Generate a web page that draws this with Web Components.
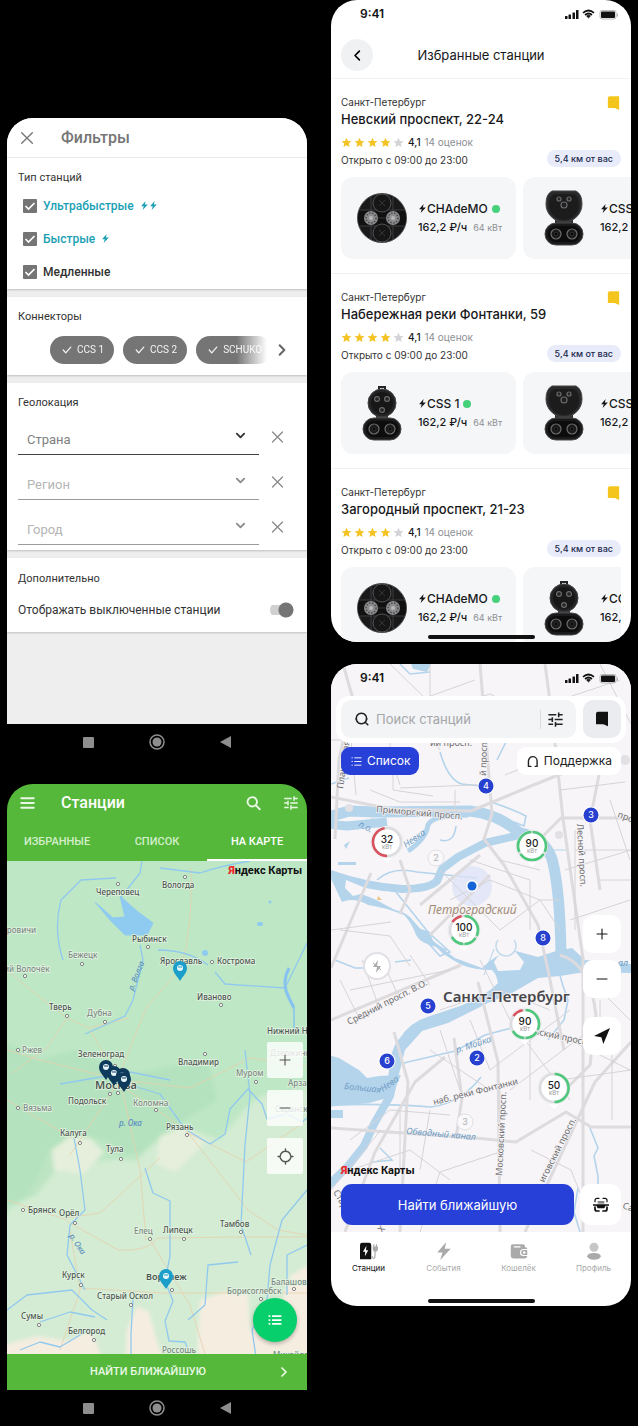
<!DOCTYPE html>
<html lang="ru">
<head>
<meta charset="utf-8">
<meta name="viewport" content="width=device-width, initial-scale=1">
<title>Зарядные станции</title>
<style>
  html, body { margin: 0; background: #000; }
  body { font-family: Inter, "Noto Sans", sans-serif; }
</style>
</head>
<body>
<app-gallery>
  <filters-screen slot="left"></filters-screen>
  <stations-map-screen slot="left"></stations-map-screen>
  <favorites-screen slot="right"></favorites-screen>
  <city-map-screen slot="right"></city-map-screen>
</app-gallery>
<script>
const define = (tag, css, render) => customElements.define(tag, class extends HTMLElement {
  connectedCallback() {
    if (this.shadowRoot) return;
    this.attachShadow({ mode: 'open' }).innerHTML =
      `<style>*{box-sizing:border-box}:host{display:block}button{font:inherit;color:inherit;border:0;background:none;padding:0;margin:0;cursor:pointer}a{color:inherit;text-decoration:none}svg{display:block}${css}</style>${render(this)}`;
  }
});

/* ---------- icons ---------- */
const stroke = (d, w = 2) => `<path d="${d}" fill="none" stroke="currentColor" stroke-width="${w}" stroke-linecap="round" stroke-linejoin="round"/>`;
const solid = d => `<path d="${d}" fill="currentColor"/>`;
const ICONS = {
  close: stroke('M4 4 20 20M20 4 4 20'),
  bolt: solid('M15 0 3 14h7l-3 10L21 9h-8z'),
  check: stroke('M3 12l6 7L21 5', 3),
  down: stroke('M4 8l8 8 8-8', 4),
  right: stroke('M8 4l8 8-8 8', 3.500),
  left: stroke('M15 5l-7 7 7 7', 2.600),
  menu: stroke('M2 4.500h20M2 12h20M2 19.500h20', 3.200),
  search: stroke('M10 2.500a7.500 7.500 0 1 0 .01 0zM15.500 15.500 22 22', 3),
  find: stroke('M11 2a9 9 0 1 0 .01 0zM17.500 17.500 22 22', 2.600),
  tune: solid('M3 17v2h6v-2H3zM3 5v2h10V5H3zm10 16v-2h8v-2h-8v-2h-2v6h2zM7 9v2H3v2h4v2h2V9H7zm14 4v-2H11v2h10zm-6-4h2V7h4V5h-4V3h-2v6z'),
  list: solid('M1 4h3v3H1zM7 4h16v3H7zM1 10.500h3v3H1zM7 10.500h16v3H7zM1 17h3v3H1zM7 17h16v3H7z'),
  listThin: stroke('M2 4h1M8 4h14M2 12h1M8 12h14M2 20h1M8 20h14', 2),
  plus: stroke('M12 2v20M2 12h20', 2.200),
  minus: stroke('M2 12h20', 2.200),
  locate: stroke('M12 4.500a7.500 7.500 0 1 0 .01 0zM12 1.500v3M12 19.500v3M1.500 12h3M19.500 12h3', 2),
  arrow: solid('M24 0 0 12l11 2 3 10z'),
  bookmark: solid('M6 1h15v22l-7-3H3V4a3 3 0 0 1 3-3z'),
  head: stroke('M9 21H4.500V11a8 8 0 0 1 16 0v10H17', 2.600),
  star: solid('M12 1.500l3.200 7 7.600.8-5.700 5.100 1.600 7.500L12 18l-6.700 3.900 1.600-7.500L1.200 9.300l7.600-.8z'),
  scan: `${stroke('M3 7V5a3 3 0 0 1 3-3h3M15 2h3a3 3 0 0 1 3 3v2', 1.800)}<path d="M7 6h10v4H7z" fill="currentColor" opacity=".5"/>${solid('M0 11h24v2H0zM5 13h14l-2 4H7z')}${stroke('M3 15v3a3 3 0 0 0 3 3h3M15 21h3a3 3 0 0 0 3-3v-3', 2.600)}`,
  station: `${solid('M3 1h9a3 3 0 0 1 3 3v19H0V4a3 3 0 0 1 3-3z')}<path d="M8.500 5 4 13h3l-.5 6L11 11H8z" fill="#fff"/><path d="M22 3v4M18.500 3v4M20 12v6q0 4-2 4-1.500 0-1.500-3" fill="none" stroke="#aaa" stroke-width="1.600"/><path d="M17 6h7v3q0 4-3.500 4T17 9z" fill="#aaa"/>`,
  wallet: `${solid('M4 3h13a3 3 0 0 1 3 3v1h1q2 0 2 2v9a4 4 0 0 1-4 4H5a4 4 0 0 1-4-4V6a3 3 0 0 1 3-3z')}<path d="M5 6.500h9M24 10h-6a4 4 0 0 0 0 8h6" fill="none" stroke="#fff" stroke-width="1.600"/><circle cx="19" cy="14" r="1.800" fill="#fff"/>`,
  profile: `<circle cx="12" cy="7" r="6" fill="#c6c6c6"/><ellipse cx="12" cy="19" rx="9" ry="4.500" fill="currentColor"/>`
};
define('ui-icon', `:host{display:inline-block;flex:none;width:16px;height:16px}svg{width:100%;height:100%;overflow:visible}`,
  el => `<svg viewBox="0 0 24 24" aria-hidden="true">${ICONS[el.getAttribute('name')]}</svg>`);

/* ---------- gallery and device parts ---------- */
define('app-gallery', `
  :host{display:grid;grid-template-columns:1fr 1fr;gap:24px;padding:0 7px}
  div{display:flex;flex-direction:column;min-width:0}
  .l{padding-top:118px;gap:24px}.r{gap:22px}`,
  () => `<div class="l"><slot name="left"></slot></div><div class="r"><slot name="right"></slot></div>`);

define('android-nav', `
  :host{display:grid;grid-template-columns:repeat(3,1fr);height:36px;padding:0 47px;background:#000;color:#8e8e8e;flex:none}
  button{display:grid;place-items:center}svg{width:16px;height:16px}`,
  () => `<button aria-label="Недавние"><svg viewBox="0 0 16 16"><rect x="3" y="3" width="11" height="11" rx="1" fill="currentColor"/></svg></button>
  <button aria-label="Домой"><svg viewBox="0 0 16 16"><circle cx="8" cy="8" r="7" fill="none" stroke="currentColor" stroke-width="1.500"/><circle cx="8" cy="8" r="4.500" fill="currentColor"/></svg></button>
  <button aria-label="Назад"><svg viewBox="0 0 16 16"><path d="M13 2v12L2 8z" fill="currentColor"/></svg></button>`);

define('ios-status', `
  :host{display:flex;justify-content:space-between;align-items:center;height:28px;padding:0 12px 0 29px;font-size:12px;line-height:16px;font-weight:600;color:#111;flex:none}
  svg{width:55px;height:12px}`,
  () => `<span>9:41</span><svg viewBox="0 0 55 12" aria-hidden="true"><g fill="#111"><rect x="1" y="8" width="2.500" height="3" rx=".5"/><rect x="4.500" y="6.500" width="2.500" height="4.500" rx=".5"/><rect x="8.500" y="4.500" width="2.500" height="6.500" rx=".5"/><rect x="12" y="2" width="2.500" height="9" rx=".5"/>
  <path d="M24.500 9.800l-1.800-1.700a2.600 2.600 0 0 1 3.600 0z" stroke="#111" stroke-width="1"/><rect x="37" y="3.500" width="14" height="6.500" rx="1"/><rect x="52.800" y="5.500" width="1" height="3" fill="#aaa"/></g>
  <path d="M19 4.800q5.500-4.600 11 0M21 7q3.500-3 7 0" fill="none" stroke="#111" stroke-width="1.700"/><rect x="36" y="2.500" width="16" height="8.500" rx="2" fill="none" stroke="#aaa" stroke-width=".8"/></svg>`);

/* ---------- filters ---------- */
define('filter-section', `
  :host{background:#fff;padding:0 11px;box-shadow:0 1px 2px #0003}
  h2{margin:0;font-size:11px;line-height:16px;font-weight:400;color:#333}`,
  el => `<h2>${el.getAttribute('heading')}</h2><slot></slot>`);

define('filter-check', `
  :host{color:var(--tone,#333)}
  label{display:flex;align-items:center;height:33px;font-size:12px;line-height:18px;font-weight:500}
  input{appearance:none;width:14px;height:14px;margin:0 6px 0 5px;border-radius:1px;background:#757575 url("data:image/svg+xml,%3Csvg xmlns='http://www.w3.org/2000/svg' viewBox='0 0 14 14'%3E%3Cpath d='M2.500 7l3 3 6-6' fill='none' stroke='white' stroke-width='1.700'/%3E%3C/svg%3E")}
  ui-icon{width:9px;height:11px}.b{display:flex;margin-left:6px}`,
  el => `<label><input type="checkbox" checked>${el.textContent}<span class="b">${'<ui-icon name="bolt"></ui-icon>'.repeat(+el.getAttribute('bolts'))}</span></label>`);

define('connector-chip', `
  :host{flex:none}
  button{display:flex;align-items:center;gap:5px;height:28px;padding:0 10px 0 12px;border-radius:14px;background:#757575;color:#f4f4f4;font-size:10px;line-height:14px}
  ui-icon{width:10px;height:10px}`,
  () => `<button aria-pressed="true"><ui-icon name="check"></ui-icon><slot></slot></button>`);

define('geo-field', `
  :host{display:grid;grid-template-columns:1fr 37px;height:45px;align-items:center}
  .f{position:relative;display:flex;align-items:flex-end;height:37px;border-bottom:1px solid var(--line,#9b9b9b)}
  select{appearance:none;width:100%;height:28px;border:0;background:none;padding:0 9px;font:400 13px/18px Roboto,sans-serif;color:var(--ink,#b5b5b5);opacity:1}
  .f ui-icon{position:absolute;right:13px;top:12px;width:11px;height:11px;color:var(--arrow,#8a8a8a);pointer-events:none}
  button{display:grid;place-items:center;color:#8a8a8a}button ui-icon{width:15px}`,
  el => { const n = el.getAttribute('name'); return `<div class="f"><select aria-label="${n}"><option>${n}</option></select><ui-icon name="down"></ui-icon></div><button aria-label="Очистить: ${n}"><ui-icon name="close"></ui-icon></button>`; });

define('filters-screen', `
  :host{display:flex;flex-direction:column;font-family:Roboto,sans-serif;aspect-ratio:300/642;border-radius:26px 26px 0 0;overflow:hidden;background:#eee}
  header{display:flex;align-items:center;height:40px;padding-left:12px;gap:26px;background:#fff;color:#757575;border-bottom:1px solid #eee;flex:none}
  header ui-icon{width:16px;height:16px;display:block}
  h1{margin:0;font-size:16px;line-height:20px;font-weight:500}
  main{display:flex;flex-direction:column;gap:8px;flex:1}
  .type{padding-top:12px;padding-bottom:1px}
  .conn{padding-top:12px;padding-bottom:11px}.geo{padding-top:12px;padding-bottom:1px}.more{padding-top:13px;padding-bottom:12px}
  .checks{padding-top:3px}
  .row{display:flex;align-items:center;padding:11px 0 0 32px}
  .chips{display:flex;gap:9px;width:217px;overflow:hidden;-webkit-mask:linear-gradient(90deg,#000 86%,transparent 100%);mask:linear-gradient(90deg,#000 86%,transparent 100%)}
  .row button{margin-left:8px;color:#666}.row ui-icon,.row button{display:block;width:14px;height:14px}
  .fields{padding-top:3px}
  .toggle{display:flex;justify-content:space-between;align-items:center;font-size:12px;line-height:20px;color:#333;padding:13px 2px 0 0}
  .toggle input{appearance:none;margin:0;width:24px;height:16px;background:radial-gradient(circle at 16px 8px,#757575 7px,transparent 8px),linear-gradient(#d0d0d0,#d0d0d0) 0 3px/20px 10px no-repeat;border-radius:8px}`,
  () => `<header><button aria-label="Закрыть"><ui-icon name="close"></ui-icon></button><h1>Фильтры</h1></header>
  <main>
    <filter-section class="type" heading="Тип станций"><div class="checks">
      <filter-check bolts="2" style="--tone:#1b9fb5">Ультрабыстрые</filter-check>
      <filter-check bolts="1" style="--tone:#1b9fb5">Быстрые</filter-check>
      <filter-check bolts="0">Медленные</filter-check></div></filter-section>
    <filter-section class="conn" heading="Коннекторы"><div class="row"><div class="chips">
      <connector-chip>CCS 1</connector-chip><connector-chip>CCS 2</connector-chip><connector-chip>SCHUKO</connector-chip></div>
      <button aria-label="Далее"><ui-icon name="right"></ui-icon></button></div></filter-section>
    <filter-section class="geo" heading="Геолокация"><div class="fields">
      <geo-field name="Страна" style="--line:#444;--ink:#808080;--arrow:#333"></geo-field>
      <geo-field name="Регион"></geo-field><geo-field name="Город"></geo-field></div></filter-section>
    <filter-section class="more" heading="Дополнительно">
      <label class="toggle">Отображать выключенные станции<input type="checkbox" role="switch" checked></label></filter-section>
  </main><android-nav></android-nav>`);

/* ---------- region map ---------- */
const town = (name, x, y, dx, dy, cls = '') => `<circle cx="${dx}" cy="${dy}" r="1.600" fill="#fff" stroke="#666" stroke-width=".8"/><text x="${x}" y="${y}" class="${cls}">${name}</text>`;
const drop = (x, y, c) => `<path d="M${x} ${y}c-3-5-7-8-7-13a7 7 0 0 1 14 0c0 5-4 8-7 13z" fill="${c}"/><circle cx="${x}" cy="${y - 13}" r="3" fill="#e8f6fb"/><path d="M${x - 2} ${y - 14}h4" stroke="${c}"/>`;
define('region-map', `
  :host{position:absolute;inset:0}
  svg{width:100%;height:100%}
  text{font:500 8px/10px "Noto Sans",sans-serif;fill:#4c5651;stroke:#e4f3e2;stroke-width:1.500px;paint-order:stroke}
  .s{fill:#7b8a83}.b{font-weight:600;font-size:9px}.w{fill:#5b8fc0;font-style:italic;stroke:none}
  .big{font-size:11px;font-weight:600}`,
  () => `<svg viewBox="7 861 300 493" preserveAspectRatio="xMidYMid slice" role="img" aria-label="Карта региона">
  <defs><filter id="soft" x="-5%" y="-5%" width="110%" height="110%"><feGaussianBlur stdDeviation="2"/></filter></defs>
  <rect x="7" y="861" width="300" height="493" fill="#d3ecd3"/>
  <g filter="url(#soft)">
  <path d="M0 850h315v235l-28 8-24 2-17 12-26 32-20-6-20-8-25 14-18 22-20-2-20 3-16-7-15-14-16 8-14 30-13 22-15 9-21 28-7-3z" fill="#bde7c5"/>
  <path d="M0 1040l37 20 40-10 50 25 80-15 10 40-30 18-25 20-20 15-22 2-10-14-30-5-25 35-20 25-35 10z" fill="#aee0b9" opacity=".6"/>
  <path d="M52 1150l18-14 20 2 14 14-20 22-30-4zM160 1136l26-10 20 16-30 30-20-8z" fill="#e6efdc"/>
  <path d="M137 1306l12 6 6 22 8 26h-38l2-30zM200 1300l24-8 24 1 4 68h-55zM290 1276l20-12v98h-58l-2-30 28-20zM0 1346l37-10 30 5 24-11 12 30H0z" fill="#f6ede1"/></g>
  <g fill="none" stroke="#e9d0ac" stroke-width="1" opacity=".8"><path d="M7 970q35 30 60 48l22 10 40-10M67 1018l-20 30-35 25M90 1030l28 48 28-70 35-40q12-40 10-100M120 1080l70 8 60-30 57 8M120 1080l-50 75M120 1080l20 90 6 70M120 1080l-80-20-33-10M120 1085l66 45 62 80 30 20 29 5M160 1158l-60 55-33 5M60 1350l20-60-10-60M68 1222l50 28q30 2 40-12l82-1 67 0M80 1288l82 5 145 0M150 1240l40 65 15 49M7 1100l65 38M7 1200l60 20M186 1132l60 30 58-40"/></g>
  <g fill="none" stroke="#91c9ee" stroke-width="1.300" stroke-linejoin="round"><path d="M142 861l-2 12-19 24M250 861q-30 5-50 12l-40-5M63 960q-10-30-2-60l20-20 35-2M140 945l3 15-10 40-8 16-22 10-18 8M158 950q30 0 50 15M215 972l10 12 60 4 22-45M170 1080l-40-8-70 12M120 1082l40 12 25 35 25 15 15-10 5-25 18-20 14 15 5 15 20-5 15 8 25-20M245 1050l5 45-5 50-4 80 10 30M74 1138l6 32 5 40-15 15-3 30 18 35M145 1168l8 25 17 8 0 55-5 25 8 20-8 20 4 20 16 1 8 20M307 1245l-20 10 0 40M307 1190l-25 30-12 45-3 35-15 30 8 54M238 1262l-30 3-3 40-17 15M131 1354l0-20 2-35M7 1310l20-15 45-5 20 20 15 10M40 1322l30-10 25 5M20 1350l20-8 20 5 30-18"/></g>
  <path d="M289 968q-8 15 0 30l5 10" fill="none" stroke="#87c3ee" stroke-width="3"/><path d="M294 1008v24" stroke="#87c3ee" stroke-width="1.500"/>
  <path d="M120 896l5 21-12 1-18-16 15 18 15 15h22l6-12-15-11z" fill="#8fcbf1" stroke="#8fcbf1" stroke-linejoin="round"/>
  <g fill="#8fcbf1"><ellipse cx="260" cy="924" rx="3" ry="2"/><ellipse cx="205" cy="953" rx="3" ry="3"/><circle cx="270" cy="902" r="1.500"/></g>
  ${town('Череповец', 96, 895, 118, 884)}${town('Вологда', 162, 888, 185, 877)}${town('Рыбинск', 132, 942, 148, 947)}
  ${town('Бежецк', 68, 958, 82, 964, 's')}${town('Ярославль', 160, 964, 182, 970)}${town('Кострома', 217, 964, 212, 962)}
  <text x="2" y="933" class="s">оровичи</text>${town('ий Волочёк', 4, 972, 25, 976, 's')}
  ${town('Иваново', 197, 1000, 221, 1005)}${town('Тверь', 49, 1010, 67, 1016)}${town('Дубна', 87, 1016, 105, 1022, 's')}
  <text x="267" y="1034">Нижний Н</text>${town('Ржев', 22, 1053, 18, 1050, 's')}${town('Зеленоград', 78, 1057, 115, 1066)}
  ${town('Владимир', 178, 1065, 205, 1054)}${town('Муром', 236, 1076, 256, 1082, 's')}<text x="270" y="1056" class="s">Дзержинск</text><text x="288" y="1086" class="s">Арзамас</text>
  ${town('Москва', 95, 1089, 118, 1093, 'big')}${town('Подольск', 68, 1104, 110, 1094)}${town('Коломна', 133, 1106, 156, 1110, 's')}
  ${town('Вязьма', 23, 1111, 18, 1108, 's')}${town('Калуга', 60, 1136, 80, 1143)}${town('Рязань', 166, 1130, 187, 1135)}${town('Тула', 106, 1152, 121, 1159)}
  <text x="275" y="1112" class="s">Саранск</text>
  ${town('Брянск', 28, 1213, 23, 1210)}${town('Орёл', 59, 1216, 75, 1223)}${town('Елец', 134, 1234, 150, 1239, 's')}${town('Липецк', 163, 1233, 184, 1239)}${town('Тамбов', 220, 1227, 241, 1232)}
  ${town('Курск', 62, 1278, 81, 1285)}${town('Воронеж', 146, 1280, 172, 1290, 'b')}${town('Старый Оскол', 97, 1299, 131, 1305)}
  ${town('Балашов', 271, 1285, 294, 1289, 's')}${town('Борисоглебск', 227, 1294, 261, 1299, 's')}${town('Сумы', 21, 1319, 39, 1325)}${town('Белгород', 68, 1334, 94, 1340)}
  <text x="162" y="1353" class="s">Россошь</text><text x="273" y="1358" class="s">Михайлов</text>
  <text class="w" transform="translate(133 991) rotate(-68)">р. Волга</text><text class="w" x="119" y="1126">р. Ока</text><text class="w" transform="translate(69 1236) rotate(57)">р. Ока</text>
  ${drop(180, 981, '#1b9ec9')}${drop(106, 1080, '#0e3a5c')}${drop(114, 1086, '#0e3a5c')}${drop(123, 1088, '#0e3a5c')}${drop(124, 1092, '#0e3a5c')}${drop(166, 1289, '#1b9ec9')}
  </svg>`);

define('yandex-mark', `:host{font:700 11px/16px Roboto,sans-serif;color:#111}b{color:#f02a2a}`, () => `<b>Я</b>ндекс Карты`);

define('stations-map-screen', `
  :host{display:flex;flex-direction:column;font-family:Roboto,sans-serif;aspect-ratio:300/642;border-radius:26px 26px 0 0;overflow:hidden;background:#55b83b}
  header{color:#fff;flex:none}
  .bar{display:flex;align-items:center;height:37px;padding:0 7px 0 13px}
  .bar ui-icon{width:18px;height:18px;display:block;color:#e9f7e5}
  .bar button:first-child ui-icon,.bar h1+button ui-icon{width:15px}
  h1{margin:0 auto 0 26px;font-size:16px;line-height:20px;font-weight:500}
  .bar button+button{margin-left:21px}
  nav{display:grid;grid-template-columns:repeat(3,1fr);height:40px}
  nav a{display:grid;place-items:center;font-size:11px;line-height:16px;font-weight:500;color:#d3efca;border-bottom:2px solid transparent;padding-top:4px}
  nav a[aria-current]{color:#fff;border-color:#fff}
  .map{position:relative;flex:1;overflow:hidden}
  yandex-mark{position:absolute;right:5px;top:2px}
  .ctl{position:absolute;right:4px;top:181px;display:flex;flex-direction:column;gap:12px}
  .ctl button{width:36px;height:36px;display:grid;place-items:center;background:#ffffffc9;color:#555;border-radius:2px}
  .ctl ui-icon{width:12px;height:12px}.ctl button:last-child ui-icon{width:17px;height:17px}
  .fab{position:absolute;right:10px;bottom:12px;width:44px;height:44px;border-radius:50%;background:#06cf6c;color:#fff;display:grid;place-items:center;box-shadow:0 2px 4px #0004}
  .fab ui-icon{width:14px;height:14px}
  .find{position:relative;height:36px;flex:none;color:#eaf8e6;font-size:11px;line-height:16px;font-weight:500;padding-right:18px}
  .find ui-icon{position:absolute;right:17px;top:12px;width:12px;height:12px}`,
  () => `<header><div class="bar"><button aria-label="Меню"><ui-icon name="menu"></ui-icon></button><h1>Станции</h1><button aria-label="Поиск"><ui-icon name="search"></ui-icon></button><button aria-label="Фильтры"><ui-icon name="tune"></ui-icon></button></div>
  <nav><a href="#fav">ИЗБРАННЫЕ</a><a href="#list">СПИСОК</a><a href="#map" aria-current="page">НА КАРТЕ</a></nav></header>
  <div class="map"><region-map></region-map><yandex-mark></yandex-mark>
  <div class="ctl"><button aria-label="Приблизить"><ui-icon name="plus"></ui-icon></button><button aria-label="Отдалить"><ui-icon name="minus"></ui-icon></button><button aria-label="Моё место"><ui-icon name="locate"></ui-icon></button></div>
  <button class="fab" aria-label="Список"><ui-icon name="list"></ui-icon></button></div>
  <button class="find">НАЙТИ БЛИЖАЙШУЮ<ui-icon name="right"></ui-icon></button><android-nav></android-nav>`);

/* ---------- favourites ---------- */
const socket = (x, y, r) => `<circle cx="${x}" cy="${y}" r="${r}" fill="#1a1a1b" stroke="#6d6d70" stroke-width="1.200"/><circle cx="${x}" cy="${y}" r="${r / 3}" fill="#050505" stroke="#3c3c3e" stroke-width=".6"/>`;
const pill = `<rect x="6" y="33" width="38" height="22" rx="11" fill="#1b1b1c" stroke="#4a4a4c"/><rect x="9" y="36" width="32" height="16" rx="8" fill="#0c0c0d"/>${socket(17, 44, 5)}${socket(33, 44, 5)}`;
const PLUGS = {
  chademo: `<defs><clipPath id="face"><circle cx="25" cy="28" r="24"/></clipPath></defs><circle cx="25" cy="28" r="24.500" fill="#19191a" stroke="#505052"/><path d="M0 20h50v16H0zM14 0v56M36 0v56" fill="#111" stroke="#3c3c3f" clip-path="url(#face)"/><g fill="#161617" stroke="#525255"><circle cx="25" cy="13" r="9"/><circle cx="25" cy="43" r="9"/></g><path d="M22 10l6 6M28 10l-6 6M22 40l6 6M28 40l-6 6M21 28h8" stroke="#343436"/><g fill="#8b8b8e"><circle cx="14" cy="28" r="7"/><circle cx="36" cy="28" r="7"/></g><g fill="none" stroke="#4b4b4e" stroke-dasharray="1.500 1.500" stroke-width="1.500"><circle cx="14" cy="28" r="5"/><circle cx="36" cy="28" r="5"/></g><g fill="#b8b8ba"><circle cx="14" cy="28" r="2"/><circle cx="36" cy="28" r="2"/></g>`,
  css2: `<path d="M16 30h18v5H16z" fill="#303032"/><path d="M13 1h24q6 3 6 13a18 18 0 0 1-36 0Q7 4 13 1z" fill="#2a2a2b" stroke="#454547"/><path d="M15 4h20q5 3 5 11a15 15 0 0 1-30 0q0-8 5-11z" fill="#1c1c1d"/>${socket(20, 9, 2)}${socket(30, 9, 2)}${socket(25, 15, 3)}${pill}`,
  css1: `<path d="M19 29h12v5H19z" fill="#3a3a3c"/><path d="M22 7V2h6v5" fill="none" stroke="#242425" stroke-width="2"/><circle cx="25" cy="18" r="14" fill="#242425" stroke="#444446"/><circle cx="25" cy="18" r="11" fill="#171718"/>${socket(20, 14, 2.400)}${socket(30, 14, 2.400)}${socket(25, 25, 2.400)}${pill}`
};
define('connector-card', `
  :host{flex:none;display:flex;align-items:center;gap:11px;width:175px;height:82px;padding-left:16px;border-radius:12px;background:#f4f6f8;white-space:nowrap;overflow:hidden;color:#17181a}
  svg{width:50px;height:56px;flex:none}
  p{margin:0;display:flex;align-items:center;height:19px;font-size:11px;line-height:19px;font-weight:500}
  p:first-child{font-size:12px}
  p ui-icon{width:9px;height:13px}.dot{width:8px;height:8px;border-radius:50%;background:#45d17a;margin-left:4px}
  small{font-size:9px;font-weight:400;color:#8c8f94;margin-left:6px}`,
  el => `<svg viewBox="0 0 50 56" role="img" aria-label="${el.textContent}">${PLUGS[el.getAttribute('plug')]}</svg><div><p><ui-icon name="bolt"></ui-icon>${el.textContent}<span class="dot"></span></p><p>162,2 ₽/ч<small>64 кВт</small></p></div>`);

define('station-item', `
  :host{padding:15px 10px 14px;border-bottom:1px solid #f0f0f0;color:#17181a}
  .city{font-size:10px;line-height:16px;color:#333}
  h2{margin:0;font-size:13px;line-height:18px;font-weight:500}
  .rate{display:flex;align-items:center;height:16px;margin-top:6px;font-size:10px;line-height:16px}
  .stars{display:flex;gap:2px;color:#f4c426;margin-right:4px}.stars ui-icon{width:11px;height:11px}.stars ui-icon:last-child{color:#d3d3d8}
  .rate b{font-weight:500;margin-right:4px}.rate span{color:#8c8f94}
  .open{display:flex;justify-content:space-between;align-items:center;height:20px;font-size:10px;line-height:16px;color:#333}
  .chip{height:17px;line-height:17px;padding:0 8px;border-radius:9px;background:#e8ecfa;color:#20264a;font-size:9px;margin-bottom:3px;font-weight:500}
  .cards{display:flex;gap:7px;overflow:hidden;margin:7px var(--bleed,-10px) 0 0}`,
  el => `<div class="city">Санкт-Петербург</div><h2>${el.getAttribute('address')}</h2>
  <div class="rate"><div class="stars" role="img" aria-label="4 из 5">${'<ui-icon name="star"></ui-icon>'.repeat(5)}</div><b>4,1</b><span>14 оценок</span></div>
  <div class="open">Открыто с 09:00 до 23:00<span class="chip">5,4 км от вас</span></div><div class="cards"><slot></slot></div>`);

define('favorites-screen', `
  :host{position:relative;display:flex;flex-direction:column;aspect-ratio:300/642;border-radius:26px;overflow:hidden;background:#fff}
  header{display:grid;grid-template-columns:32px 1fr 32px;align-items:center;height:51px;padding:4px 10px 0;border-bottom:1px solid #f3f3f3;flex:none}
  header button{width:32px;height:32px;border-radius:50%;background:#f0f1f3;display:grid;place-items:center}header ui-icon{width:15px;height:15px}
  h1{margin:0;text-align:center;font-size:13px;line-height:18px;font-weight:400;color:#17181a}
  main{flex:1;min-height:0;overflow:hidden}.wrap{position:relative}
  .save{position:absolute;right:10px;top:16px;color:#f4c61d}.save ui-icon{display:block;width:15px;height:16px}
  .home{position:absolute;left:50%;bottom:3px;width:107px;height:4px;margin-left:-53px;border-radius:2px;background:#111}`,
  () => { const save = '<button class="save" aria-label="Убрать из избранного"><ui-icon name="bookmark"></ui-icon></button>'; return `<ios-status></ios-status>
  <header><button aria-label="Назад"><ui-icon name="left"></ui-icon></button><h1>Избранные станции</h1></header>
  <main>
  <div class="wrap"><station-item address="Невский проспект, 22-24"><connector-card plug="chademo">CHAdeMO</connector-card><connector-card plug="css2">CSS 2</connector-card></station-item>${save}</div>
  <div class="wrap"><station-item address="Набережная реки Фонтанки, 59"><connector-card plug="css1">CSS 1</connector-card><connector-card plug="css2">CSS 2</connector-card></station-item>${save}</div>
  <div class="wrap"><station-item address="Загородный проспект, 21-23" style="--bleed:0px"><connector-card plug="chademo">CHAdeMO</connector-card><connector-card plug="css1">CCS 1</connector-card></station-item>${save}</div>
  </main><div class="home"></div>`; });

/* ---------- city map ---------- */
const dotPin = (x, y, n) => `<circle cx="${x}" cy="${y}" r="8.500" fill="#fff"/><circle cx="${x}" cy="${y}" r="7.500" fill="#2740d0"/><text x="${x}" y="${y + 3}" class="n">${n}</text>`;
const arc = (x, y, a, b, c) => { const p = t => { const r = (t - 90) * Math.PI / 180; return `${(x + 14 * Math.cos(r)).toFixed(1)} ${(y + 14 * Math.sin(r)).toFixed(1)}`; }; return `<path d="M${p(a)}A14 14 0 ${b - a > 180 ? 1 : 0} 1 ${p(b)}" fill="none" stroke="${c}" stroke-width="2.600"/>`; };
const power = (x, y, n, arcs) => `<path d="M${x - 7} ${y + 13}l7 8 7-8z" fill="#fff"/><circle cx="${x}" cy="${y}" r="16" fill="#fff" stroke="#0001"/><circle cx="${x}" cy="${y}" r="14" fill="none" stroke="#dcdce0" stroke-width="2.600"/>${arcs.map(a => arc(x, y, ...a)).join('')}<text x="${x}" y="${y + 1}" class="p">${n}</text><text x="${x}" y="${y + 7}" class="k">кВт</text>`;
const G = '#4fc77c', R = '#d9535f';
define('city-map', `
  :host{position:absolute;inset:0}svg{width:100%;height:100%}
  text{font:400 9px/12px "Noto Sans",sans-serif;fill:#6d6d70;stroke:#f6f4f6;stroke-width:1.500px;paint-order:stroke}
  .n{font:500 9px/12px Inter,sans-serif;fill:#fff;stroke:none;text-anchor:middle}
  .p{font:500 10px/12px Inter,sans-serif;fill:#222;stroke:none;text-anchor:middle}
  .k{font:400 6px/8px Inter,sans-serif;fill:#9a9a9e;stroke:none;text-anchor:middle}
  .g{font:400 9px/12px Inter,sans-serif;fill:#b5b5b8;text-anchor:middle}
  .w{font-style:italic;fill:#6f9dc4;stroke:none}
  .d{font-style:italic;font-size:12px;fill:#a28d78}.city{font-size:15px;font-weight:600;fill:#47474b}`,
  () => `<svg viewBox="331 664 300 568" preserveAspectRatio="xMidYMid slice" role="img" aria-label="Карта Санкт-Петербурга">
  <rect x="331" y="664" width="300" height="568" fill="#f7f5f7"/>
  <g fill="none" stroke="#b4d4ec" stroke-linejoin="round">
    <path d="M325 818l24-7 26 1 95-1q28 3 50 22 24 4 32 26 8 30 9 95" stroke-width="11"/>
    <path d="M325 824l22 2 40-4" stroke-width="9"/>
    <path d="M524 834l-39 9-27 14-16 12-5 12q-8 8-35 8-40-3-77-17" stroke-width="8"/>
    <path d="M468 815q-36 0-40 10-2 14-20 26" stroke-width="5"/>
    <path d="M394 1078l-4 18-16 28-10 22-16 20-24 24" stroke-width="8"/>
    <path d="M484 975l10-26M547 850l20 0" stroke-width="1"/>
  </g>
  <g fill="#b4d4ec">
    <path d="M325 866q20 16 40 28l30 16q10 2 16 8 14 18 44 40l27 10q14-14 30-18l26 7 18-6 16-3 13 12 46 4v9l-46-1-25 4-22 2-26 15-24 10-40 20-26 8-17 19-7 28-6 12q-8-4-4-12l3-22q4-14 9-18 10-16 30-22l30-10q26-10 38-23-2-10-6-13-18 0-30-5-16-8-26-18-16-4-20-12-4-12-12-20-20-8-36-10-14-8-26-3z"/>
    <path d="M325 1054l14 4 20 12 8 8 12-2 22-1-10 22-22 6-44 4zM331 1110h12v8h-12zM411 664h20l-4 8-14-3zM338 862h18v3h-18z"/>
    <path d="M371 818l14 3-2 8zM344 845l6-4-4 8zM418 928l12 4 4 12zM433 942l14 8-4 4z"/>
  </g>
  <path d="M494 962q8-14 20-12l10 12-4 8-22 1zM346 880l34 14 8-3 9 13-6 1-30-11-8 2-8-8z" fill="#f7f5f7"/>
  <g fill="none" stroke="#b4d4ec" stroke-width="1.600"><path d="M440 752q8 28 22 32l18 2M507 740l-10 20M491 802q24 8 35 14l-2 10-10-4M440 840q14 4 16-14M400 664l10 10 20-2M331 784l18-6M377 880q15-14 40-8l60 6M396 892q20 25 32 40l22 20-10 4-20-22M335 960l20 8 14 0M395 962l16-2M395 1065l60-14 30-16 30-8M555 958l8 28 5 14-4 20-16 20M331 1105q55-2 100 2 30-4 50-30M590 1128l8 20-4 8 4 20 0 10M580 1232l-6-20 4-24M380 1148l12 12-20 2"/></g>
  <circle cx="472" cy="886" r="20" fill="#dce2f7" opacity=".75"/>
  <g fill="none" stroke="#dddbde" stroke-width="3" stroke-linejoin="round"><path d="M343 664l10 35-14 60-4 80M331 797l60 12 80 2 60-25 50-20M545 664l8 60 10 95 20 140 0 273M480 664l4 50 8 100-8 25 20 26 34 60 10 45 16 80M631 818l-70 0-22 22-20 6M331 968l40-95M331 1020l130-55M331 1128l145 10 40 4 50-30 25 15 40 0M456 1138l6-40-8-60M420 905l60-50M490 875l-60 60M602 760l-12 60 10 70M345 1232l30-80 40-70 30-25M400 1232l8-150-14-50M500 1232l-2-170-20-80M525 1232l70-150 36-40"/><path d="M400 860l10 30-10 24M560 955q30 8 36 60l-6 50-30 30"/></g>
  <g fill="none" stroke="#d6d4d8" stroke-width="1"><path d="M331 740h20l5 55M390 664l35 34 50-18M390 743v12l10 30M393 752v38l40 6M420 720l20 30M560 790l65-8M400 788l95-4M370 790l30 12 60 0M455 790v20M575 850l56 0M600 880h31M331 930l60-8M360 1020l-20-40M380 1010l-18-50M400 1000l-20-45M430 985l-20-30M350 1140l40-30 60 5M350 1170l60-20 40 30M420 1232l20-60 60-20M531 1150l40 20 12 30M450 900l40-20 50 20M470 860l60 20 0 50M500 930l40-30 20 0M440 870l60 60M440 1010l60-20 50 20M430 1050l60 40M490 1070l80-60M510 1090l80-60M530 1100l0-60M570 1040l60 30M560 1080l71-10M331 1190l50-60M612 1040l0 80M500 1190l60 0M430 664v50M600 664l31 60M470 700l20-6 20 10 20-8M500 860l40 10M565 870l66-20M610 800l20 60M500 1130v-40M480 960l30 60 60 80M340 930l50 6 20 30M350 990l100-20M440 1030l20 60M470 1020l20 50M400 1110v60M430 1110l-10 60M331 1085M540 900l20 30M570 920l60-20M590 980l40 40M600 1000v50M350 715l60-14M520 720l30-14M560 700l60-20M505 775l50-20M575 830v100"/></g>
  <g fill="#e2e0e4"><circle cx="349" cy="808" r="4"/><circle cx="559" cy="835" r="4"/><circle cx="625" cy="760" r="5"/></g>
  <path d="M514 940a10 10 0 1 1-16 0" fill="none" stroke="#c3daec" stroke-width="1.500"/>
  <text transform="translate(376 812) rotate(5)">Приморский просп.</text><text transform="translate(343 789) rotate(-82)">Планерная</text><text x="430" y="746">ий просп.</text>
  <text transform="translate(486 776) rotate(-88)">й просп.</text><text transform="translate(577 824) rotate(87)">Лесной просп.</text><text transform="translate(617 817) rotate(20)">просп.</text>
  <text transform="translate(349 1025) rotate(-27)">Средний просп. В.О.</text><text x="534" y="1034" transform="rotate(12 534 1034)">вский просп.</text>
  <text transform="translate(434 1105) rotate(-14)">наб. реки Фонтанки</text><text transform="translate(502 1176) rotate(-87)">Московский просп.</text><text transform="translate(544 1183) rotate(-63)">иговский просп.</text>
  <text transform="translate(333 1192) rotate(60)">Старо</text><text transform="translate(382 1233) rotate(-50)">Х</text><text transform="translate(622 1208) rotate(20)">Са</text>
  <text class="w" transform="translate(457 1053) rotate(-18)">р. Мойка</text><text class="w" transform="translate(344 1089) rotate(6)">Большая</text><text class="w" transform="translate(383 1092) rotate(-35)">Нева</text>
  <text class="w" transform="translate(406 848) rotate(-35)">Невка</text><text class="w" transform="translate(358 826) rotate(28)">п.о.</text><text class="w" x="406" y="1134" transform="rotate(5 406 1134)">Обводный канал</text><text class="w" x="618" y="966">ал</text>
  <text class="d" x="428" y="914">Петроградский</text><text class="city" x="443" y="1002">Санкт-Петербург</text>
  <circle cx="472" cy="886" r="6" fill="#fff"/><circle cx="472" cy="886" r="4.500" fill="#1464d8"/>
  ${dotPin(486, 786, 4)}${dotPin(591, 815, 3)}${dotPin(543, 938, 8)}${dotPin(428, 1006, 5)}${dotPin(477, 1058, 2)}${dotPin(387, 1061, 6)}
  <g fill="#f9f8fa" stroke="#e2e0e4"><circle cx="436" cy="858" r="8"/><circle cx="465" cy="1122" r="8"/><circle cx="377" cy="966" r="13" fill="#fff" stroke-width="2"/></g><text class="g" x="436" y="861">2</text><text class="g" x="465" y="1125">3</text>
  <path d="M378 960l-5 7h4l-1 6 5-7h-4z" fill="#aaa"/><path d="M373 963l8 7" stroke="#aaa"/><path d="M378 896l4 4h-5z" fill="#edc488"/>
  ${power(387, 842, 32, [[180, 350, R]])}${power(532, 846, 90, [[3, 115, G], [125, 235, G], [245, 357, G]])}${power(464, 930, 100, [[3, 115, G], [125, 178, G], [183, 240, G], [305, 350, R]])}
  ${power(525, 1024, 90, [[3, 115, G], [125, 178, G], [183, 240, G], [305, 350, R]])}${power(554, 1088, 50, [[3, 178, G]])}
  </svg>`);

define('tab-link', `
  :host{color:var(--tone,#aaa)}
  a{display:flex;flex-direction:column;align-items:center;gap:2px;font-size:8px;line-height:12px}
  ui-icon{width:18px;height:18px}`,
  el => `<a href="#${el.getAttribute('icon')}"><ui-icon name="${el.getAttribute('icon')}"></ui-icon><slot></slot></a>`);

define('city-map-screen', `
  :host{position:relative;display:flex;flex-direction:column;aspect-ratio:300/642;border-radius:26px;overflow:hidden;background:#fff}
  .map{position:relative;flex:1;display:flex;flex-direction:column;overflow:hidden}
  ios-status,.search,.pills,.find{position:relative;z-index:1}
  .search{display:flex;gap:7px;margin:4px 5px 0;padding:4px 5px 5px;background:#fff;border-radius:14px}
  .box{flex:1;display:flex;align-items:center;min-width:0;height:38px;padding:0 11px 0 14px;border-radius:10px;background:#f3f4f6;color:#222}
  .box>ui-icon{width:14px;height:14px}
  .box input{flex:1;min-width:0;border:0;outline:0;background:none;margin:0;padding:0 0 0 7px;font:400 13px/18px Inter,sans-serif;color:#222}
  .box input::placeholder{color:#a4a6aa;opacity:1}
  .box>button{padding-left:5px;border-left:1px solid #dcdcde}.box>button ui-icon{display:block;width:19px;height:19px}
  .sq{width:38px;height:38px;display:grid;place-items:center;border-radius:10px;background:#fff;color:#111}.search .sq{background:#ebecef}
  .pills{display:flex;justify-content:space-between;margin:4px 10px 0}
  .pills button{display:flex;align-items:center;gap:5px;height:28px;padding:0 9px;border-radius:9px;background:#fff;color:#222;font-size:12px;line-height:16px}
  .pills ui-icon{width:13px;height:13px}.pills button:first-child{background:#2740d8;color:#fff}.pills button:first-child ui-icon{width:11px;height:11px;margin-left:1px}
  .zoom{position:absolute;z-index:1;right:10px;top:251px;display:grid;gap:7px}.zoom .sq:last-child{margin-top:12px}
  .bottom{position:relative;z-index:1;margin:auto 10px 7px}
  yandex-mark{margin-bottom:5px}.row{display:flex;gap:6px}
  .cta{flex:1;height:41px;border-radius:11px;background:#2740d8;color:#fff;font-size:13px;line-height:20px}
  .row .sq{width:41px;height:41px}
  nav{display:grid;grid-template-columns:repeat(4,1fr);height:74px;padding-top:10px;flex:none}
  .home{position:absolute;left:50%;bottom:3px;width:107px;height:4px;margin-left:-53px;border-radius:2px;background:#111}`,
  () => `<div class="map"><city-map></city-map><ios-status></ios-status>
  <div class="search"><div class="box"><ui-icon name="find"></ui-icon><input type="search" aria-label="Поиск станций" placeholder="Поиск станций"><button aria-label="Фильтры"><ui-icon name="tune"></ui-icon></button></div><button class="sq" aria-label="Избранное"><ui-icon name="bookmark"></ui-icon></button></div>
  <div class="pills"><button><ui-icon name="listThin"></ui-icon>Список</button><button><ui-icon name="head"></ui-icon>Поддержка</button></div>
  <div class="zoom"><button class="sq" aria-label="Приблизить"><ui-icon name="plus" style="width:12px"></ui-icon></button><button class="sq" aria-label="Отдалить"><ui-icon name="minus" style="width:12px"></ui-icon></button><button class="sq" aria-label="Моё место"><ui-icon name="arrow"></ui-icon></button></div>
  <div class="bottom"><yandex-mark></yandex-mark><div class="row"><button class="cta">Найти ближайшую</button><button class="sq" aria-label="Сканировать"><ui-icon name="scan"></ui-icon></button></div></div></div>
  <nav><tab-link icon="station" style="--tone:#111">Станции</tab-link><tab-link icon="bolt">События</tab-link><tab-link icon="wallet">Кошелёк</tab-link><tab-link icon="profile">Профиль</tab-link></nav><div class="home"></div>`);
</script>
</body>
</html>
